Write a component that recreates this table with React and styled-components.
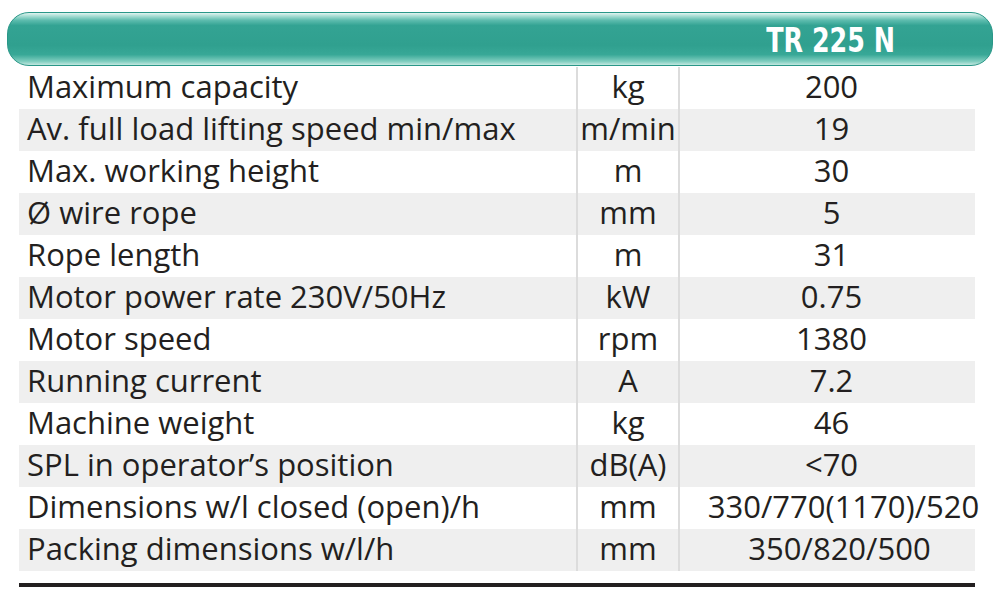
import React from 'react';
import styled, { createGlobalStyle } from 'styled-components';

const GlobalStyle = createGlobalStyle`
  body {
    margin: 0;
    background: #FFFFFF;
    font-family: 'Open Sans', 'Noto Sans', sans-serif;
    color: #231F20;
  }
`;

const Page = styled.div`
  width: 1000px;
  height: 599px;
  padding-top: 12px;
  box-sizing: border-box;
`;

const Header = styled.div`
  margin: 0 7px;
  height: 54px;
  box-sizing: border-box;
  border: 1.5px solid #2A9788;
  border-radius: 22px;
  background: linear-gradient(
    to bottom,
    #E2F4F0 0%,
    #A6DDD3 6%,
    #5DBCAE 14%,
    #33A393 24%,
    #30A08F 62%,
    #38A897 80%,
    #7FCDBF 93%,
    #C2E7DF 100%
  );
  display: grid;
  grid-template-columns: 568px 104px 312px;
`;

const Title = styled.div`
  grid-column: 3;
  display: flex;
  align-items: center;
  justify-content: center;
  padding-right: 10px;
  color: #FFFFFF;
  font-family: 'DejaVu Sans', sans-serif;
  font-stretch: condensed;
  font-weight: 700;
  font-size: 34px;
  line-height: 1;
`;

const TitleText = styled.span`
  display: inline-block;
  transform: scaleX(0.83);
  margin-top: 2px;
`;

const Table = styled.div`
  margin: 1px 0 0 19px;
  width: 956px;
`;

const Row = styled.div`
  display: grid;
  grid-template-columns: 557px 104px 295px;
  height: 42px;
  background: ${p => (p.$shaded ? '#EFEFEF' : '#FFFFFF')};
`;

const Cell = styled.div`
  display: flex;
  align-items: flex-start;
  font-size: 31px;
  line-height: 38px;
  white-space: nowrap;
`;

const Label = styled(Cell)`
  padding-left: 8px;
`;

const Unit = styled(Cell)`
  justify-content: center;
  border-left: 2px solid #DCDCDC;
  border-right: 2px solid #DCDCDC;
`;

const Value = styled(Cell)`
  justify-content: center;
  padding-left: ${p => 8 + (p.$nudge || 0)}px;
`;

const BottomRule = styled.div`
  margin: 12px 0 0 19px;
  width: 956px;
  height: 4px;
  background: #231F20;
`;

const rows = [
  ['Maximum capacity', 'kg', '200'],
  ['Av. full load lifting speed min/max', 'm/min', '19'],
  ['Max. working height', 'm', '30'],
  ['Ø wire rope', 'mm', '5'],
  ['Rope length', 'm', '31'],
  ['Motor power rate 230V/50Hz', 'kW', '0.75'],
  ['Motor speed', 'rpm', '1380'],
  ['Running current', 'A', '7.2'],
  ['Machine weight', 'kg', '46'],
  ['SPL in operator’s position', 'dB(A)', '<70'],
  ['Dimensions w/l closed (open)/h', 'mm', '330/770(1170)/520', 24],
  ['Packing dimensions w/l/h', 'mm', '350/820/500', 16],
];

export default function App() {
  return (
    <Page>
      <GlobalStyle />
      <Header>
        <Title>
          <TitleText>TR 225 N</TitleText>
        </Title>
      </Header>
      <Table>
        {rows.map(([label, unit, value, nudge], i) => (
          <Row key={label} $shaded={i % 2 === 1}>
            <Label>{label}</Label>
            <Unit>{unit}</Unit>
            <Value $nudge={nudge}>{value}</Value>
          </Row>
        ))}
      </Table>
      <BottomRule />
    </Page>
  );
}
